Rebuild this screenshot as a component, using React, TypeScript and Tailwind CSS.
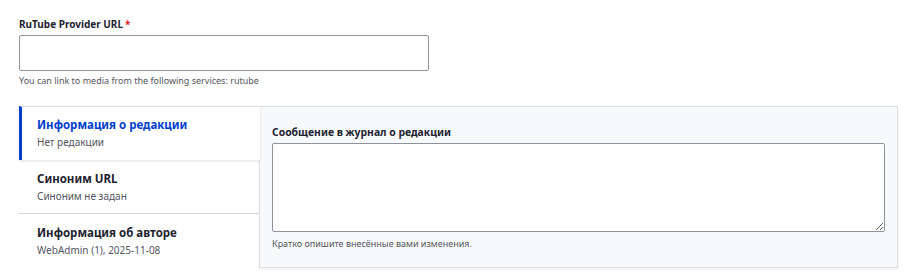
export default function App() {
  const tabs = [
    { title: "Информация о редакции", summary: "Нет редакции", active: true },
    { title: "Синоним URL", summary: "Синоним не задан", active: false },
    { title: "Информация об авторе", summary: "WebAdmin (1), 2025-11-08", active: false },
  ];

  return (
    <div className="min-h-[278px] bg-white pl-[19px] pt-[17px] font-['Noto_Sans',sans-serif] text-[#222330]">
      {/* URL field */}
      <label className="block text-[10px] font-bold leading-[14px]">
        RuTube Provider URL<span className="ml-[2px] text-[#dc2323]">*</span>
      </label>
      <input
        type="text"
        className="mt-[4px] block h-[36px] w-[410px] rounded-[2px] border border-[#8e929c] bg-white"
      />
      <p className="mt-[4px] text-[9px] leading-[12px] text-[#545560]">
        You can link to media from the following services: rutube
      </p>

      {/* Vertical tabs */}
      <div className="mt-[19px] flex w-[879px]">
        <ul className="w-[240px] shrink-0">
          {tabs.map((t, i) => (
            <li
              key={i}
              className={
                t.active
                  ? "relative z-10 -mr-px h-[54px] border-l-[3px] border-t border-[#003ecc] border-t-[#dedfe4] bg-white pl-[15px] pt-[10px] shadow-[0_1px_3px_rgba(0,0,0,0.12)]"
                  : i === 1
                  ? "h-[54px] border-b border-[#d3d4d9] pl-[18px] pt-[11px]"
                  : "h-[54px] pl-[18px] pt-[11px]"
              }
            >
              <div
                className={`text-[11.5px] font-bold leading-[16px] ${
                  t.active ? "text-[#003ecc]" : "text-[#222330]"
                }`}
              >
                {t.title}
              </div>
              <div className="mt-[2px] text-[10px] leading-[14px] text-[#545560]">{t.summary}</div>
            </li>
          ))}
        </ul>

        <div className="h-[162px] flex-1 border border-[#dedfe4] bg-[#f8f9fb] px-[12px] pt-[18px] shadow-[0_1px_2px_rgba(0,0,0,0.08)]">
          <label className="block text-[10.4px] font-bold leading-[14px]">
            Сообщение в журнал о редакции
          </label>
          <textarea className="mt-[4px] block h-[89px] w-full rounded-[2px] border border-[#8e929c] bg-white" />
          <p className="mt-[6px] text-[9px] leading-[12px] text-[#545560]">
            Кратко опишите внесённые вами изменения.
          </p>
        </div>
      </div>
    </div>
  );
}
